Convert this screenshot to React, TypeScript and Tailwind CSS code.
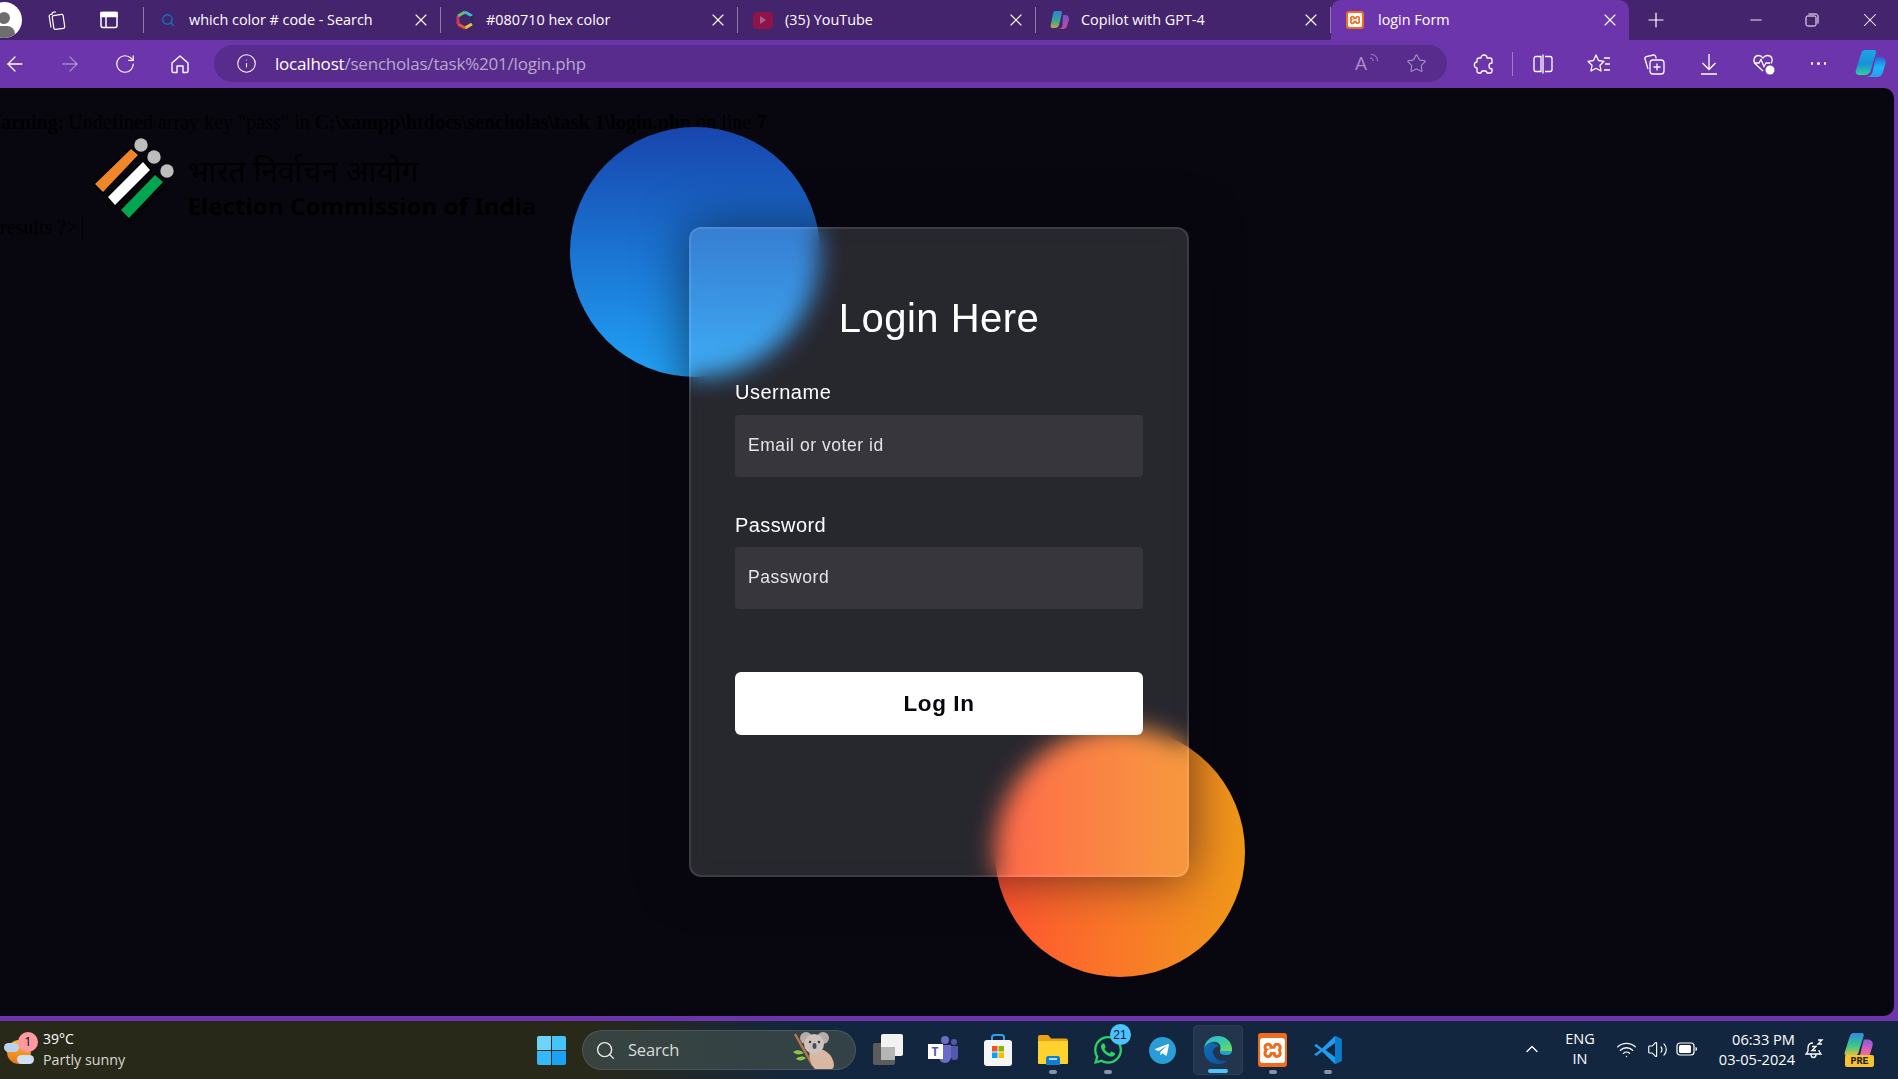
import {
  ArrowLeft,
  ArrowRight,
  ChevronUp,
  Info,
  Minus,
  Plus,
  RotateCw,
  Search,
  Star,
  Volume2,
  Wifi,
  X,
} from "lucide-react";
import { FaTelegramPlane, FaWhatsapp } from "react-icons/fa";
import { SiXampp } from "react-icons/si";
import type { ReactNode } from "react";

function XamppIcon({ size }: { size: number }) {
  return (
    <div
      className={
        size > 20
          ? "flex h-[34px] w-[29px] items-center justify-center rounded-[3px] bg-[#ef6c1f]"
          : "flex h-[18px] w-[18px] items-center justify-center rounded-[3px] bg-[#ef6c1f]"
      }
    >
      <SiXampp className="text-white" size={size > 20 ? 25 : 14} />
    </div>
  );
}

function ColorHex() {
  return (
    <svg width="18" height="20" viewBox="0 0 18 20" fill="none" strokeWidth="3">
      <path d="M9 2 16 6" stroke="#3fb6d8" />
      <path d="M16 6V14" stroke="#2a2d4f" />
      <path d="M16 14 9 18" stroke="#e8c53a" />
      <path d="M9 18 2 14" stroke="#e2582f" />
      <path d="M2 14V6" stroke="#c8355f" />
      <path d="M2 6 9 2" stroke="#5cc46a" />
    </svg>
  );
}

function CopilotFavicon() {
  return (
    <svg width="20" height="20" viewBox="0 0 20 20">
      <defs>
        <linearGradient id="cpa" x1="0" y1="0" x2="0" y2="1">
          <stop offset="0" stopColor="#2f7fd6" />
          <stop offset="0.6" stopColor="#3aa88f" />
          <stop offset="1" stopColor="#c9a13f" />
        </linearGradient>
        <linearGradient id="cpb" x1="0" y1="0" x2="0" y2="1">
          <stop offset="0" stopColor="#7a4fc8" />
          <stop offset="1" stopColor="#c14f96" />
        </linearGradient>
      </defs>
      <path d="M5 1h6c1 0 1 1 1 2L9 15c-.5 2-2 3-4 3H3c-2 0-3-1-2-4L3 4c.3-2 1-3 2-3Z" fill="url(#cpa)" />
      <path d="M13 5h2c3 0 4 2 4 5l-2 6c-.5 2-2 3-4 3H8c2 0 4-1 4.5-3Z" fill="url(#cpb)" />
    </svg>
  );
}

function CopilotLogo({ size, pre }: { size: number; pre?: boolean }) {
  const a = pre ? "cl-pre-a" : "cl-a";
  const b = pre ? "cl-pre-b" : "cl-b";
  return (
    <svg width={size} height={size} viewBox="0 0 32 32">
      <defs>
        <linearGradient id={a} x1="0" y1="0" x2="0" y2="1">
          <stop offset="0" stopColor={pre ? "#2f8be0" : "#1aa6e8"} />
          <stop offset="0.55" stopColor={pre ? "#3cc68a" : "#1b8fd8"} />
          <stop offset="1" stopColor={pre ? "#e8c53a" : "#2fd0a0"} />
        </linearGradient>
        <linearGradient id={b} x1="0" y1="0" x2="0" y2="1">
          <stop offset="0" stopColor={pre ? "#8a5bdc" : "#2f5fe0"} />
          <stop offset="0.5" stopColor={pre ? "#d85fb8" : "#1ab8f0"} />
          <stop offset="1" stopColor={pre ? "#f07a8a" : "#2d9cf0"} />
        </linearGradient>
      </defs>
      <path d="M10 2h9c2 0 2.500 1.500 2 3l-5.500 18c-.7 2.500-3 4-5.500 4H5c-3.500 0-5-2-4-5L6 6c.7-2.500 2-4 4-4Z" fill={`url(#${a})`} />
      <path d="M21 9h4c4 0 6.500 2.500 5.500 6.500L28 24c-.8 3-3 5-6 5H11c3 0 5.500-1.500 6.500-5Z" fill={`url(#${b})`} />
    </svg>
  );
}

function Edge() {
  return (
    <svg width="32" height="32" viewBox="0 0 32 32">
      <defs>
        <linearGradient id="edge-a" x1="0" y1="0" x2="1" y2="1">
          <stop offset="0" stopColor="#0f70b8" />
          <stop offset="1" stopColor="#0a4f9c" />
        </linearGradient>
        <linearGradient id="edge-b" x1="0" y1="0" x2="1" y2="1">
          <stop offset="0" stopColor="#2bb6e8" />
          <stop offset="0.6" stopColor="#3ccf9a" />
          <stop offset="1" stopColor="#7ddc55" />
        </linearGradient>
      </defs>
      <path d="M2 16C2 8 8 2 16 2c8 0 14 6 14 13v2H18c2-6-2-10-7-9-5 1-9 4-9 8Z" fill="url(#edge-b)" />
      <path d="M2 16c0-4 4-7 8-7 4 0 6 2 7 4-3-1-6 1-6 5 0 5 5 9 10 9 2 0 4-.5 5-1.500C24 29 20 30 16 30 8 30 2 24 2 16Z" fill="url(#edge-a)" />
      <path d="M18 17h12c0 2-2 4-5 4-4 0-8-1-7-4Z" fill="#1fa0d8" />
    </svg>
  );
}

function VsCode() {
  return (
    <svg width="30" height="30" viewBox="0 0 30 30">
      <path d="M22 1 28.500 4v22L22 29 9 16.500 3.500 21 1 19.500 7 15 1 10.500 3.500 9 9 13.500Z" fill="#1f9cf0" />
      <path d="M22 1 28.500 4v22L22 29Z" fill="#0b7ccc" />
      <path d="M22 8 12.500 15 22 22Z" fill="#14253d" />
    </svg>
  );
}

function Koala() {
  return (
    <svg width="46" height="38" viewBox="0 0 46 38">
      <path d="M2 2 20 34" stroke="#b5764a" strokeWidth="2.500" />
      <path d="M0 20c4-3 8-2 11 1-4 2-8 2-11-1ZM3 27c3-3 7-3 10-1-3 3-7 3-10 1Z" fill="#8ec63f" />
      <path d="M17 18c8-3 18 0 22 8 3 6 2 10 0 11H22c-4-4-7-12-5-19Z" fill="#d8b8a2" />
      <circle cx="13" cy="6" r="6" fill="#b9aca8" />
      <circle cx="30" cy="6" r="6" fill="#b9aca8" />
      <circle cx="21" cy="12" r="10" fill="#cdc2be" />
      <circle cx="17" cy="10" r="1.200" fill="#333" />
      <circle cx="26" cy="10" r="1.200" fill="#333" />
      <ellipse cx="21.500" cy="14" rx="2" ry="3" fill="#4d4a50" />
    </svg>
  );
}

function TaskIcon({ children, dot }: { children: ReactNode; dot?: boolean }) {
  return (
    <div className="relative flex h-[50px] w-[55px] items-center justify-center">
      {children}
      {dot && <span className="absolute bottom-[1px] h-[4px] w-[8px] rounded-full bg-[#8a93a3]" />}
    </div>
  );
}

const tabs: { title: string; icon: ReactNode; width: string; iconBox: string }[] = [
  {
    title: "which color # code - Search",
    icon: <Search size={14} strokeWidth={2.2} className="text-[#0b78c8]" />,
    width: "w-[297px]",
    iconBox: "w-[45px]",
  },
  { title: "#080710 hex color", icon: <ColorHex />, width: "w-[297px]", iconBox: "w-[45px]" },
  {
    title: "(35) YouTube",
    icon: (
      <div className="flex h-[17px] w-[20px] items-center justify-center rounded-[4px] bg-[#8e1348]">
        <div className="h-0 w-0 border-y-[4px] border-l-[6px] border-y-transparent border-l-[#a75f86]" />
      </div>
    ),
    width: "w-[298px]",
    iconBox: "w-[47px]",
  },
  { title: "Copilot with GPT-4", icon: <CopilotFavicon />, width: "w-[295px]", iconBox: "w-[45px]" },
];

export default function App() {
  return (
    <div className="flex h-[1079px] w-[1898px] flex-col overflow-hidden bg-[#6d35ab] font-['Open_Sans',sans-serif] text-white">
      {/* tab strip */}
      <div className="flex h-[40px] shrink-0 bg-[#45246e]">
        <div className="flex w-[144px] shrink-0 items-center">
          <div className="-ml-[14px] flex h-[36px] w-[36px] shrink-0 items-end justify-center overflow-hidden rounded-full bg-white">
            <div className="flex flex-col items-center">
              <div className="h-[12px] w-[12px] rounded-full bg-[#6e6e6e]" />
              <div className="mt-[2px] h-[12px] w-[22px] rounded-t-[8px] bg-[#6e6e6e]" />
            </div>
          </div>
          <svg className="ml-[23px] shrink-0" width="22" height="22" viewBox="0 0 22 22" fill="none" stroke="white" strokeWidth="1.200">
            <rect x="8" y="6" width="11" height="14" rx="1.500" transform="rotate(-8 13 13)" />
            <path d="M8 5 5.500 5.500c-1 .2-1.500 1-1.300 2L6 18.500" />
            <path d="M11 3 8.500 3.200c-1 .1-1.500.8-1.500 1.800" />
          </svg>
          <svg className="ml-[32px] shrink-0" width="20" height="20" viewBox="0 0 20 20" fill="none" stroke="white" strokeWidth="1.500">
            <rect x="2" y="2.500" width="16" height="15" rx="2" />
            <rect x="2" y="2.500" width="16" height="4" fill="white" />
            <path d="M7 6.500v11" />
          </svg>
          <div className="ml-[24px] h-[26px] w-px shrink-0 bg-white/40" />
        </div>

        {tabs.map((tab) => (
          <div key={tab.title} className={`${tab.width} flex shrink-0 items-center`}>
            <div className={`${tab.iconBox} flex shrink-0 justify-center pl-[2px]`}>{tab.icon}</div>
            <span className="whitespace-nowrap text-[14.400px] leading-none">{tab.title}</span>
            <X size={20} strokeWidth={1.3} className="ml-auto mr-[9px] shrink-0" />
            <div className="h-[26px] w-px shrink-0 bg-white/40" />
          </div>
        ))}

        <div className="flex w-[298px] shrink-0 items-center rounded-t-[10px] bg-[#6d35ab]">
          <div className="flex w-[47px] shrink-0 justify-center">
            <XamppIcon size={14} />
          </div>
          <span className="whitespace-nowrap text-[14.400px] leading-none">login Form</span>
          <X size={20} strokeWidth={1.3} className="ml-auto mr-[9px] shrink-0" />
        </div>
        <div className="ml-[14px] flex w-[26px] items-center justify-center">
          <Plus size={24} strokeWidth={1.2} />
        </div>
        <div className="ml-[74px] flex w-[26px] items-center justify-center">
          <Minus size={18} strokeWidth={1.2} />
        </div>
        <div className="ml-[30px] flex w-[26px] items-center justify-center">
          <svg width="14" height="14" viewBox="0 0 14 14" fill="none" stroke="white" strokeWidth="1">
            <rect x="1" y="3" width="10" height="10" rx="1.500" />
            <path d="M3.500 1h7.500c1 0 2 1 2 2v7.500" />
          </svg>
        </div>
        <div className="ml-[32px] flex w-[26px] items-center justify-center">
          <X size={22} strokeWidth={1.1} />
        </div>
      </div>

      {/* toolbar */}
      <div className="flex h-[48px] shrink-0 items-center pb-[1px]">
        <div className="-ml-[13px] flex w-[55px] shrink-0 justify-center">
          <ArrowLeft size={24} strokeWidth={1.3} />
        </div>
        <div className="flex w-[55px] shrink-0 justify-center">
          <ArrowRight size={24} strokeWidth={1.3} className="text-white/40" />
        </div>
        <div className="flex w-[55px] shrink-0 justify-center">
          <RotateCw size={22} strokeWidth={1.3} />
        </div>
        <div className="flex w-[55px] shrink-0 justify-center">
          <svg width="20" height="20" viewBox="0 0 20 20" fill="none" stroke="white" strokeWidth="1.400" strokeLinejoin="round">
            <path d="M2 9 10 2l8 7v8a1.500 1.500 0 0 1-1.500 1.500H13V12H7v6.500H3.500A1.500 1.500 0 0 1 2 17Z" />
          </svg>
        </div>

        <div className="ml-[7px] flex h-[37px] w-[1233px] shrink-0 items-center rounded-full bg-[#572c8c]">
          <Info size={21} strokeWidth={1.2} className="ml-[22px] shrink-0" />
          <span className="ml-[18px] text-[17px] leading-none tracking-[-0.2px]">
            localhost<span className="text-[#b9a8ca]">/sencholas/task%201/login.php</span>
          </span>
          <div className="ml-auto mr-[20px] flex items-center gap-[27px] text-[#a992c4]">
            <div className="relative flex h-[22px] w-[24px] items-center text-[19px] leading-none">
              A
              <svg className="absolute right-0 top-0" width="10" height="10" viewBox="0 0 10 10" fill="none" stroke="currentColor" strokeWidth="1">
                <path d="M1 5c2 0 3 1 3 3M2 1.500c4 0 6.500 2.500 6.500 6.500" />
              </svg>
            </div>
            <Star size={21} strokeWidth={1.2} />
          </div>
        </div>

        <div className="ml-[9px] flex w-[55px] shrink-0 justify-center">
          <svg width="22" height="22" viewBox="0 0 22 22" fill="none" stroke="white" strokeWidth="1.300" strokeLinejoin="round">
            <path d="M8 5c0-4 6-4 6 0h3c1 0 2 1 2 2v3c-4 0-4 6 0 6v2c0 1-1 2-2 2h-3c0-3-6-3-6 0H6c-1 0-2-1-2-2v-3c-3.500 0-3.500-6 0-6V7c0-1 1-2 2-2Z" />
          </svg>
        </div>
        <div className="ml-[1px] h-[24px] w-px shrink-0 bg-white/35" />
        <div className="ml-[2px] flex w-[56px] shrink-0 justify-center">
          <svg width="22" height="22" viewBox="0 0 22 22" fill="none" stroke="white" strokeWidth="1.300">
            <path d="M9 3.500H4a2 2 0 0 0-2 2v11a2 2 0 0 0 2 2h5ZM13 3.500h5a2 2 0 0 1 2 2v11a2 2 0 0 1-2 2h-5M11 1.500v19" />
          </svg>
        </div>
        <div className="flex w-[55px] shrink-0 justify-center">
          <svg width="24" height="22" viewBox="0 0 24 22" fill="none" stroke="white" strokeWidth="1.300" strokeLinejoin="round">
            <path d="M9 2 11.500 7.500 17 8.300 13 12.300 14 18 9 15.300 4 18 5 12.300 1 8.300 6.500 7.500Z" />
            <path d="M17 5h6M18 11h5M17 17h6" />
          </svg>
        </div>
        <div className="flex w-[55px] shrink-0 justify-center">
          <svg width="24" height="24" viewBox="0 0 24 24" fill="none" stroke="white" strokeWidth="1.300">
            <path d="M6 17 3 7c-.3-1 .3-2 1.300-2.300l7-1.700c1-.2 1.900.3 2.200 1.200l.8 2.300" />
            <rect x="8" y="8" width="14" height="14" rx="3" />
            <path d="M15 11.500v7M11.500 15h7" />
          </svg>
        </div>
        <div className="flex w-[55px] shrink-0 justify-center">
          <svg width="22" height="24" viewBox="0 0 22 24" fill="none" stroke="white" strokeWidth="1.300">
            <path d="M11 2v15M4.500 11l6.500 6.500 6.500-6.500M3 22h16" />
          </svg>
        </div>
        <div className="flex w-[55px] shrink-0 justify-center">
          <svg width="24" height="24" viewBox="0 0 24 24" fill="none" stroke="white" strokeWidth="1.300">
            <path d="M11 19 3.500 12C.5 9 2 3.500 6.500 3.500c2 0 3.500 1 4.500 2.500 1-1.500 2.500-2.500 4.500-2.500 4.500 0 6 4.500 3.500 8" />
            <path d="M2 11h5l2-3.500 3 7 2-3.500h4" />
            <circle cx="18" cy="18" r="4.500" fill="white" stroke="none" />
          </svg>
        </div>
        <div className="flex w-[55px] shrink-0 justify-center gap-[4px]">
          <span className="h-[2.500px] w-[2.500px] rounded-full bg-white" />
          <span className="h-[2.500px] w-[2.500px] rounded-full bg-white" />
          <span className="h-[2.500px] w-[2.500px] rounded-full bg-white" />
        </div>
        <div className="flex w-[50px] shrink-0 justify-center">
          <CopilotLogo size={32} />
        </div>
      </div>

      {/* page */}
      <div className="relative h-[928px] w-[1894px] shrink-0 overflow-hidden rounded-r-[10px] bg-[#080710] font-['Liberation_Serif',serif] text-[20px] leading-[23px] text-black">
        <p className="-ml-[18px] mt-[23px] whitespace-nowrap tracking-[0.02px]">
          <b>Warning</b>: Undefined array key "pass" in <b>C:\xampp\htdocs\sencholas\task 1\login.php</b> on line <b>7</b>
        </p>

        <div className="-mt-[4px] flex items-start">
          <span className="mt-[86px] whitespace-nowrap">results ?&gt;</span>
          <div className="ml-[5px] mt-[86px] h-[22px] w-px shrink-0 bg-black" />
          <svg className="ml-[3px] shrink-0" width="100" height="100" viewBox="0 0 100 100">
            <path id="logo-arc-b" d="M42 96 90 47" fill="none" />
            <path d="M45 17 54 25 17 64 7 54Z" fill="#000" />
            <path d="M57 30 66 40 29 77 20 67Z" fill="#000" />
            <path d="M69 43 79 52 43 90 33 80Z" fill="#000" />
            <path d="M45 19 52 25 17 62 9 54Z" fill="#ef8629" />
            <path d="M57 32 64 40 29 75 22 67Z" fill="#fff" />
            <path d="M69 45 77 52 43 88 35 80Z" fill="#03a650" />
            <circle cx="55" cy="15" r="6.700" fill="#bdbdbd" />
            <circle cx="68" cy="27" r="6.700" fill="#bdbdbd" />
            <circle cx="81" cy="41" r="6.700" fill="#bdbdbd" />
            <text fontSize="5" fontWeight="700" fill="#000">
              <textPath href="#logo-arc-b">Election Commission of India</textPath>
            </text>
          </svg>
          <div className="ml-[1px] flex flex-col font-['Noto_Sans',sans-serif] text-black">
            <span className="mt-[23px] text-[30px] leading-[36px]">भारत निर्वाचन आयोग</span>
            <span className="mt-[2px] text-[24px] font-bold leading-[30px] tracking-[0.1px]">Election Commission of India</span>
          </div>
        </div>

        {/* glass card over the two blobs */}
        <div className="absolute left-[570px] top-[39px] h-[850px] w-[675px] font-['Liberation_Sans',sans-serif]">
          <div className="absolute left-0 top-0 h-[250px] w-[250px] rounded-full bg-linear-to-b from-[#1845ad] to-[#23a2f6]" />
          <div className="absolute bottom-0 right-0 h-[250px] w-[250px] rounded-full bg-linear-to-r from-[#ff512f] to-[#f09819]" />
          <div className="absolute left-[119px] top-[100px] flex h-[650px] w-[500px] flex-col rounded-[12px] border-2 border-white/10 bg-white/13 px-[44px] pt-[63px] text-white shadow-[0_0_50px_rgba(8,7,16,0.6)] backdrop-blur-[12px]">
            <h3 className="text-center text-[40px] font-normal leading-[52px] tracking-[0.5px]">Login Here</h3>
            <label className="mt-[37px] text-[20px] font-medium leading-[23px] tracking-[0.5px]">Username</label>
            <div className="mt-[11px] flex h-[62px] items-center rounded-[4px] bg-white/7 px-[13px] pb-[2px] text-[17.500px] tracking-[0.55px] text-[#e5e5e5]">
              Email or voter id
            </div>
            <label className="mt-[37px] text-[20px] font-medium leading-[23px] tracking-[0.4px]">Password</label>
            <div className="mt-[10px] flex h-[62px] items-center rounded-[4px] bg-white/7 px-[13px] pb-[2px] text-[17.500px] tracking-[0.55px] text-[#e5e5e5]">
              Password
            </div>
            <button className="mt-[63px] h-[63px] rounded-[6px] bg-white pb-[1px] text-[22.500px] font-bold tracking-[0.6px] text-[#080710]">Log In</button>
          </div>
        </div>
      </div>

      {/* taskbar */}
      <div className="mt-[5px] flex h-[58px] shrink-0 items-center bg-[linear-gradient(90deg,#29291a_0%,#29291a_31%,#12263f_43%,#12263f_100%)]">
        <div className="flex w-[524px] shrink-0 items-center pb-[2px]">
          <div className="relative ml-[4px] h-[34px] w-[36px] shrink-0">
            <div className="absolute left-[3px] top-[8px] h-[24px] w-[24px] rounded-full bg-linear-to-b from-[#f7b733] to-[#e8741c]" />
            <div className="absolute left-0 top-[11px] h-[9px] w-[15px] rounded-full bg-[#b9d3ee]" />
            <div className="absolute left-[13px] top-[23px] h-[9px] w-[17px] rounded-full bg-[#cfe0f4]" />
            <div className="absolute left-[14px] top-0 flex h-[20px] w-[20px] items-center justify-center rounded-full bg-[#ff9aa2] text-[12px] text-black">1</div>
          </div>
          <div className="ml-[3px] flex flex-col">
            <span className="text-[14px] leading-[20px]">39°C</span>
            <span className="text-[14.300px] leading-[21px] text-[#d8d8d0]">Partly sunny</span>
          </div>
        </div>

        <TaskIcon>
          <div className="grid h-[29px] w-[29px] grid-cols-2 gap-[1px]">
            <div className="rounded-tl-[2px] bg-[#6fd3f7]" />
            <div className="rounded-tr-[2px] bg-[#45c4f7]" />
            <div className="rounded-bl-[2px] bg-[#34b8f7]" />
            <div className="rounded-br-[2px] bg-[#1aa3f5]" />
          </div>
        </TaskIcon>

        <div className="ml-[3px] flex h-[40px] w-[274px] shrink-0 items-center rounded-full border border-white/10 bg-[#3c4a4a]/80">
          <Search size={21} strokeWidth={1.6} className="ml-[12px] text-[#e8e8e8]" />
          <span className="ml-[12px] text-[16.500px] leading-none tracking-[-0.2px] text-[#d8dcdc]">Search</span>
          <div className="ml-auto mr-[16px] -mb-[2px]">
            <Koala />
          </div>
        </div>

        <div className="ml-[4px] flex shrink-0">
          <TaskIcon>
            <div className="relative h-[34px] w-[32px]">
              <div className="absolute bottom-[2px] left-[1px] h-[22px] w-[22px] rounded-[2px] bg-[#5c5c5c]" />
              <div className="absolute right-[1px] top-[1px] h-[22px] w-[22px] rounded-[2px] bg-[#f2f2f2]" />
              <div className="absolute left-[9px] top-[14px] h-[13px] w-[14px] bg-[#b5b5b5]" />
            </div>
          </TaskIcon>
          <TaskIcon>
            <div className="relative h-[30px] w-[30px]">
              <div className="absolute left-[13px] top-[1px] h-[8px] w-[8px] rounded-full bg-[#6b6bc8]" />
              <div className="absolute right-[1px] top-[4px] h-[6px] w-[6px] rounded-full bg-[#5558af]" />
              <div className="absolute bottom-[2px] left-[11px] h-[18px] w-[12px] rounded-b-[6px] bg-[#6b6bc8]" />
              <div className="absolute bottom-[5px] right-0 h-[14px] w-[7px] rounded-b-[4px] bg-[#5558af]" />
              <div className="absolute left-0 top-[9px] flex h-[15px] w-[15px] items-center justify-center bg-white text-[12px] font-bold leading-none text-[#5558af]">T</div>
            </div>
          </TaskIcon>
          <TaskIcon>
            <svg width="30" height="32" viewBox="0 0 30 32">
              <path d="M9 7V3.500C9 2 10 1 11.500 1h7C20 1 21 2 21 3.500V7" fill="none" stroke="#2ea3e8" strokeWidth="2" />
              <rect x="1" y="6" width="28" height="26" rx="3" fill="#f5f5f5" />
              <rect x="9" y="12" width="5.500" height="5.500" fill="#f25022" />
              <rect x="15.500" y="12" width="5.500" height="5.500" fill="#7fba00" />
              <rect x="9" y="18.500" width="5.500" height="5.500" fill="#00a4ef" />
              <rect x="15.500" y="18.500" width="5.500" height="5.500" fill="#ffb900" />
            </svg>
          </TaskIcon>
          <TaskIcon dot>
            <svg width="30" height="32" viewBox="0 0 30 32">
              <path d="M0 3c0-1 .7-2 2-2h7c1 0 1.500.4 2 1l2 2.500h15c1 0 2 1 2 2V28H0Z" fill="#e8a418" />
              <rect y="7" width="30" height="23" rx="1" fill="#ffd22e" />
              <path d="M8 31v-7c0-1 1-2 2-2h10c1 0 2 1 2 2v7Z" fill="#0f80cf" />
              <rect x="11" y="24" width="8" height="2" fill="#ffffff" opacity="0.7" />
            </svg>
          </TaskIcon>
          <TaskIcon dot>
            <div className="relative">
              <FaWhatsapp size={32} className="text-[#2bd366]" />
              <div className="absolute -right-[7px] -top-[10px] flex h-[21px] w-[21px] items-center justify-center rounded-full bg-[#4cc2ff] font-['Liberation_Sans',sans-serif] text-[12px] text-[#0b2038]">21</div>
            </div>
          </TaskIcon>
          <TaskIcon>
            <div className="flex h-[27px] w-[27px] items-center justify-center rounded-full bg-[#2a9cd8]">
              <FaTelegramPlane size={16} className="-ml-[2px] text-white" />
            </div>
          </TaskIcon>
          <div className="relative mx-[2.500px] flex h-[50px] w-[50px] items-center justify-center rounded-[5px] border border-white/5 bg-white/7">
            <Edge />
            <span className="absolute bottom-[1px] h-[4px] w-[20px] rounded-full bg-[#4cc2ff]" />
          </div>
          <TaskIcon dot>
            <XamppIcon size={30} />
          </TaskIcon>
          <TaskIcon dot>
            <VsCode />
          </TaskIcon>
        </div>

        {/* tray */}
        <div className="ml-auto flex shrink-0 items-center pb-[2px] pr-[19px]">
          <div className="flex w-[30px] justify-center">
            <ChevronUp size={20} strokeWidth={1.6} />
          </div>
          <div className="ml-[8px] flex w-[50px] flex-col items-center text-[14.500px] leading-[20px]">
            <span>ENG</span>
            <span>IN</span>
          </div>
          <div className="ml-[6px] flex w-[30px] justify-center">
            <Wifi size={21} strokeWidth={1.5} />
          </div>
          <div className="ml-[1px] flex w-[30px] justify-center">
            <Volume2 size={21} strokeWidth={1.3} />
          </div>
          <div className="flex w-[30px] justify-center">
            <svg width="22" height="14" viewBox="0 0 22 14" fill="none">
              <rect x="1" y="1" width="17" height="12" rx="3" stroke="white" strokeWidth="1.200" />
              <rect x="3" y="3" width="12" height="8" rx="1.500" fill="white" />
              <path d="M19.500 5c1 0 1.500.8 1.500 2s-.5 2-1.500 2Z" fill="white" />
            </svg>
          </div>
          <div className="flex w-[93px] flex-col items-end whitespace-nowrap text-[14.600px] leading-[20px]">
            <span>06:33 PM</span>
            <span>03-05-2024</span>
          </div>
          <div className="ml-[4px] flex w-[30px] justify-center">
            <svg width="20" height="22" viewBox="0 0 20 22" fill="none" stroke="white" strokeWidth="1.300">
              <path d="M9 5C5.500 5 4 7.500 4 10v3l-2 3h15l-2-3v-1M7 16.500c0 2 1 3 2.500 3s2.500-1 2.500-3" />
              <path d="M8 8.500h4l-4 4h4M14 2h4l-4 4h4" />
            </svg>
          </div>
          <div className="relative ml-[10px] flex h-[36px] w-[40px] justify-center">
            <CopilotLogo size={30} pre />
            <div className="absolute bottom-0 left-[6px] flex h-[12px] w-[29px] items-center justify-center rounded-[2px] bg-[#f7c32e] font-['Liberation_Mono',monospace] text-[10px] font-bold text-[#222]">PRE</div>
          </div>
        </div>
      </div>
    </div>
  );
}
